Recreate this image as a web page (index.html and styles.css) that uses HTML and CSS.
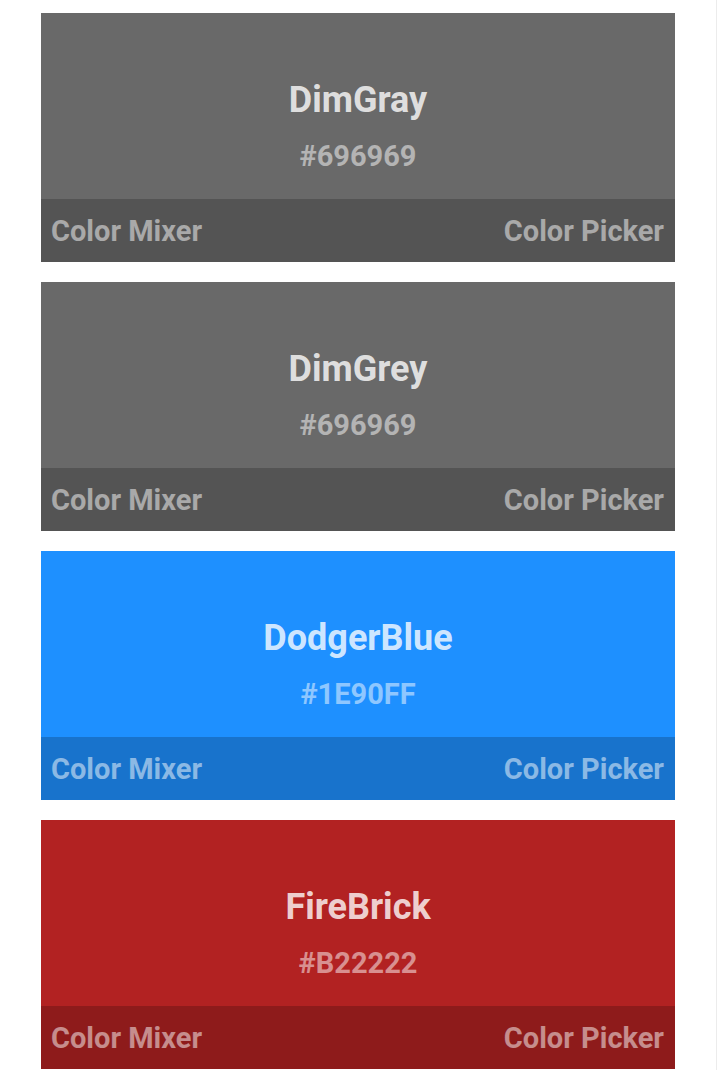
FILE: index.html
```html
<!DOCTYPE html>
<html>
<head>
<meta charset="utf-8">
<link rel="stylesheet" href="styles.css">
</head>
<body>
<div class="page">
  <div class="list">
    <div class="card c-dimgray">
      <div class="main">
        <div class="name">DimGray</div>
        <div class="hex">#696969</div>
      </div>
      <div class="foot"><span>Color Mixer</span><span>Color Picker</span></div>
    </div>
    <div class="card c-dimgray">
      <div class="main">
        <div class="name">DimGrey</div>
        <div class="hex">#696969</div>
      </div>
      <div class="foot"><span>Color Mixer</span><span>Color Picker</span></div>
    </div>
    <div class="card c-dodger">
      <div class="main">
        <div class="name">DodgerBlue</div>
        <div class="hex">#1E90FF</div>
      </div>
      <div class="foot"><span>Color Mixer</span><span>Color Picker</span></div>
    </div>
    <div class="card c-fire">
      <div class="main">
        <div class="name">FireBrick</div>
        <div class="hex">#B22222</div>
      </div>
      <div class="foot"><span>Color Mixer</span><span>Color Picker</span></div>
    </div>
  </div>
</div>
</body>
</html>
```
FILE: styles.css
```css
html, body {
  margin: 0;
  padding: 0;
  background: #ffffff;
}
body {
  font-family: Roboto, "Liberation Sans", sans-serif;
  height: 1070px;
  overflow: hidden;
}
.page {
  width: 716px;
  border-right: 1px solid #ececec;
  min-height: 1070px;
  box-sizing: content-box;
}
.list {
  display: flex;
  flex-direction: column;
  gap: 20px;
  padding: 13px 0 0 41px;
}
.card {
  width: 634px;
  height: 249px;
  display: flex;
  flex-direction: column;
}
.c-dimgray { background: #696969; }
.c-dodger { background: #1e90ff; }
.c-fire { background: #b22222; }
.main {
  height: 186px;
  display: flex;
  flex-direction: column;
  align-items: center;
  justify-content: flex-start;
  padding-top: 67px;
  box-sizing: border-box;
}
.name {
  font-size: 36px;
  font-weight: 700;
  line-height: 40px;
  color: rgba(255, 255, 255, 0.8);
}
.hex {
  margin-top: 21px;
  font-size: 29px;
  font-weight: 700;
  line-height: 30px;
  color: rgba(255, 255, 255, 0.5);
}
.foot {
  flex: 1;
  background: rgba(0, 0, 0, 0.2);
  display: flex;
  justify-content: space-between;
  align-items: center;
  padding: 0 11px 0 10px;
  font-size: 29px;
  font-weight: 700;
  color: rgba(255, 255, 255, 0.5);
}
```
